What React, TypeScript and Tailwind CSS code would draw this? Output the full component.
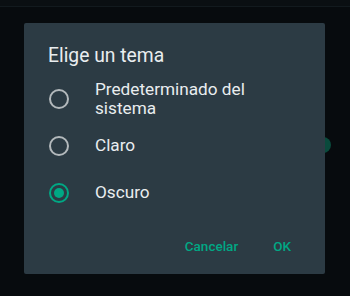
import React from "react";

function Radio({ checked }: { checked: boolean }) {
  return (
    <div
      className={
        "w-[20px] h-[20px] rounded-full border-[2px] flex items-center justify-center shrink-0 " +
        (checked ? "border-[#00a884]" : "border-[#b3b9bc]")
      }
    >
      {checked && <div className="w-[10px] h-[10px] rounded-full bg-[#00a884]" />}
    </div>
  );
}

export default function App() {
  const options = [
    { label: "Predeterminado del sistema", checked: false },
    { label: "Claro", checked: false },
    { label: "Oscuro", checked: true },
  ];
  return (
    <div
      className="relative w-[350px] h-[296px] bg-[#070b0e] overflow-hidden"
      style={{ fontFamily: "Roboto, 'Noto Sans', sans-serif" }}
    >
      <div className="h-[7px] bg-[#0a0f12] border-b border-[#121a1e]" />
      <div className="absolute left-[315px] top-[137px] w-[16px] h-[16px] rounded-full bg-[#0a4a3c]" />
      <div className="relative ml-[24px] mt-[16px] w-[301px] h-[251px] bg-[#2c3b44] rounded-[2px] flex flex-col">
        <div className="pl-[24px] pt-[20px] h-[53px] text-[19.3px] leading-[25px] text-[#e9edef]">
          Elige un tema
        </div>
        <div className="flex flex-col">
          {options.map((o) => (
            <div key={o.label} className="h-[46.67px] flex items-center pl-[25px]">
              <Radio checked={o.checked} />
              <div className="ml-[26px] w-[170px] text-[17.2px] leading-[19.5px] text-[#e9edef]">
                {o.label}
              </div>
            </div>
          ))}
        </div>
        <div className="flex justify-end items-center gap-[35px] pr-[34px] mt-[20px] text-[13.5px] font-medium text-[#00a884]">
          <span>Cancelar</span>
          <span>OK</span>
        </div>
      </div>
    </div>
  );
}
